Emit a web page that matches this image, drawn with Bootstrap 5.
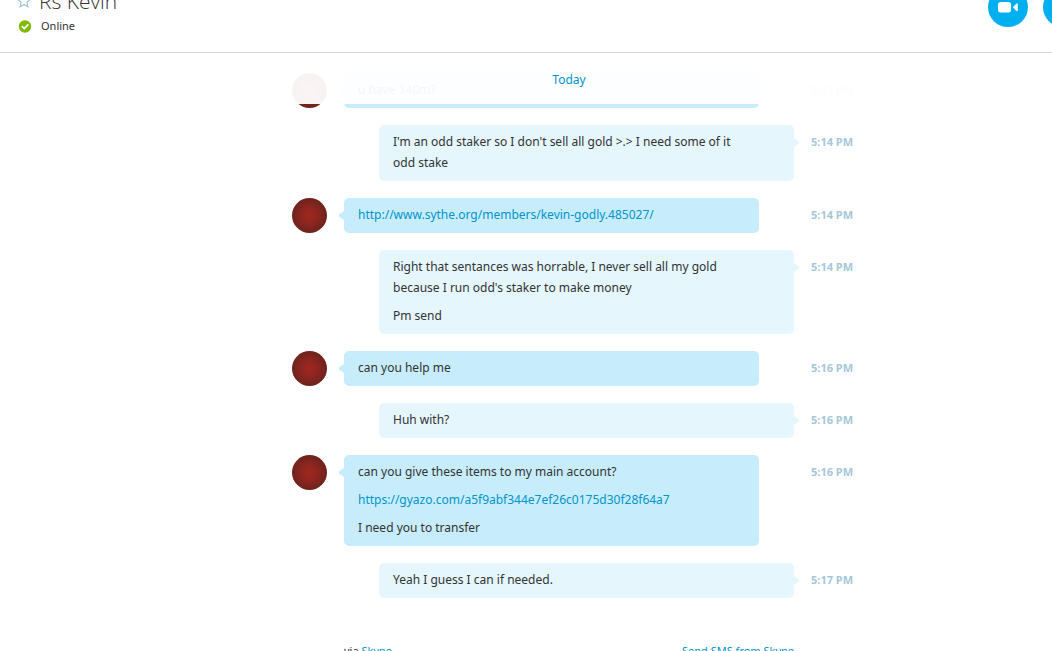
<!DOCTYPE html>
<html lang="en">
<head>
<meta charset="utf-8">
<meta name="viewport" content="width=device-width, initial-scale=1">
<title>Rs Kevin</title>
<link href="https://cdn.jsdelivr.net/npm/bootstrap@5.3.0/dist/css/bootstrap.min.css" rel="stylesheet">
<style>
body { font-family: "Noto Sans", "Open Sans", sans-serif; font-size: 12px; line-height: 21px; color: #333; background: #fff; }
a { color: #0095cc; text-decoration: none; }
a:hover { text-decoration: underline; }
.chat-header { height: 53px; border-bottom: 1px solid #d9d9d9; padding: 0 0 16px 17px; }
.contact-name { font-family: "Open Sans", "Noto Sans", sans-serif; font-size: 21px; line-height: 30px; font-weight: 300; color: #333; }
.name-line { gap: 8px; }
.status-line { font-size: 11px; line-height: 20px; gap: 9px; }
.call-btn { width: 40px; height: 40px; background: #00aff0; border: 0; color: #fff; }
.call-group { gap: 15px; margin-right: -31px; padding-bottom: 9px; }
.conversation { padding-left: 93px; }
.thread { width: 561px; padding-top: 20px; display: flex; flex-direction: column; gap: 17px; }
.message { display: grid; grid-template-columns: 35px 450px 42px; column-gap: 17px; align-items: start; }
.avatar { width: 35px; height: 35px; border-radius: 50%; background: radial-gradient(circle, #a3261f 0%, #8c251f 35%, #55211d 100%); }
.bubble { position: relative; width: 415px; padding: 6px 40px 8px 14px; border-radius: 5px; background: #c7ecfc; display: flex; flex-direction: column; gap: 7px; }
.bubble p { margin: 0; line-height: 21px; }
.bubble::before { content: ""; position: absolute; top: 13px; left: -5px; width: 5px; height: 9px; background: inherit; clip-path: polygon(0 40%, 100% 0, 100% 100%, 0 60%); }
.mine { margin-left: 35px; background: #e5f6fd; }
.mine::before { left: auto; right: -5px; clip-path: polygon(0 0, 100% 40%, 100% 60%, 0 100%); }
.sent-at { font-size: 11px; font-weight: 700; line-height: 34px; color: #a5c8d9; white-space: nowrap; }
.day-bar { position: absolute; z-index: 2; top: 0; left: 0; right: 0; height: 51px; background: rgba(255,255,255,.95); padding: 16px 0 0 86px; }
.via-row { padding: 25px 59px 0 52px; font-size: 11px; }
</style>
</head>
<body class="vh-100 overflow-hidden d-flex flex-column">
<header class="chat-header d-flex justify-content-between align-items-end overflow-hidden flex-shrink-0">
  <div>
    <div class="name-line d-flex align-items-center">
      <svg width="14" height="14" viewBox="0 0 14 14" fill="none" stroke="#9fc3d6" stroke-width="1.2" aria-hidden="true"><path d="M7 .8l1.800 4.100 4.500.4-3.400 3 1 4.500L7 10.500l-3.900 2.300 1-4.500-3.400-3 4.500-.4z"/></svg>
      <h1 class="contact-name mb-0">Rs Kevin</h1>
    </div>
    <div class="status-line d-flex align-items-center">
      <svg width="15" height="13" viewBox="0 0 15 13" aria-hidden="true"><circle cx="8" cy="6.500" r="6.200" fill="#7fba00"/><path d="M5.300 6.700l2 1.900 3.600-3.700" fill="none" stroke="#fff" stroke-width="1.800" stroke-linecap="round"/></svg>
      <span>Online</span>
    </div>
  </div>
  <div class="call-group d-flex">
    <button type="button" class="call-btn rounded-circle p-0 d-flex align-items-center justify-content-center" aria-label="Video call">
      <svg width="20" height="11" viewBox="0 0 20 11" fill="#fff" aria-hidden="true"><rect x="0" y="0" width="13" height="10.500" rx="2.500"/><path d="M14.800 5.200L18.600 1.500q1.200-.8 1.200.4v6.700q0 1.200-1.200.4z"/></svg>
    </button>
    <button type="button" class="call-btn rounded-circle p-0" aria-label="Call"></button>
  </div>
</header>
<main class="conversation position-relative flex-grow-1 overflow-hidden">
  <div class="day-bar text-center"><a href="#">Today</a></div>
  <div class="thread mx-auto">
    <div class="message"><div class="avatar"></div><div class="bubble"><p>u have 140m?</p></div><time class="sent-at">5:13 PM</time></div>
    <div class="message"><span></span><div class="bubble mine"><p>I'm an odd staker so I don't sell all gold &gt;.&gt; I need some of it odd stake</p></div><time class="sent-at">5:14 PM</time></div>
    <div class="message"><div class="avatar"></div><div class="bubble"><p><a href="#">http://www.sythe.org/members/kevin-godly.485027/</a></p></div><time class="sent-at">5:14 PM</time></div>
    <div class="message"><span></span><div class="bubble mine"><p>Right that sentances was horrable, I never sell all my gold because I run odd's staker to make money</p><p>Pm send</p></div><time class="sent-at">5:14 PM</time></div>
    <div class="message"><div class="avatar"></div><div class="bubble"><p>can you help me</p></div><time class="sent-at">5:16 PM</time></div>
    <div class="message"><span></span><div class="bubble mine"><p>Huh with?</p></div><time class="sent-at">5:16 PM</time></div>
    <div class="message"><div class="avatar"></div><div class="bubble"><p>can you give these items to my main account?</p><p><a href="#">https://gyazo.com/a5f9abf344e7ef26c0175d30f28f64a7</a></p><p>I need you to transfer</p></div><time class="sent-at">5:16 PM</time></div>
    <div class="message"><span></span><div class="bubble mine"><p>Yeah I guess I can if needed.</p></div><time class="sent-at">5:17 PM</time></div>
    <div class="via-row d-flex justify-content-between"><span>via <a href="#">Skype</a></span><a href="#">Send SMS from Skype</a></div>
  </div>
</main>
<script src="https://cdn.jsdelivr.net/npm/bootstrap@5.3.0/dist/js/bootstrap.bundle.min.js"></script>
</body>
</html>
